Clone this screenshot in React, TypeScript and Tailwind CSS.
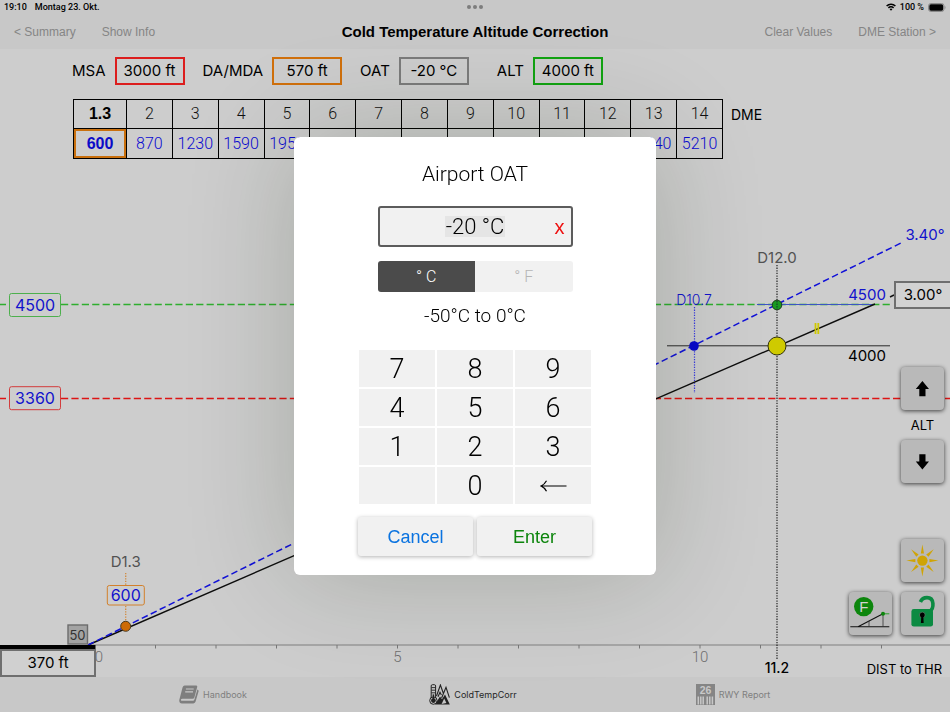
// src/App.tsx
import { useState } from 'react';
import type { ReactNode } from 'react';

type Field = {
  label: string;
  value: string;
  border: string;
  wrap?: string;
};

const FIELDS: Field[] = [
  { label: 'MSA', value: '3000 ft', border: 'border-[#dc1e1e]' },
  { label: 'DA/MDA', value: '570 ft', border: 'border-[#d0700c]' },
  { label: 'OAT', value: '-20 °C', border: 'border-[#7b7b7b]' },
  { label: 'ALT', value: '4000 ft', border: 'border-[#12a312]', wrap: 'ml-2.5' },
];

const DME_ROWS = [
  { dme: '2', alt: 870 },
  { dme: '3', alt: 1230 },
  { dme: '4', alt: 1590 },
  { dme: '5', alt: 1950 },
  { dme: '6', alt: 2310 },
  { dme: '7', alt: 2670 },
  { dme: '8', alt: 3030 },
  { dme: '9', alt: 3400 },
  { dme: '10', alt: 3760 },
  { dme: '11', alt: 4120 },
  { dme: '12', alt: 4480 },
  { dme: '13', alt: 4840 },
  { dme: '14', alt: 5210 },
];

const KEYS = ['7', '8', '9', '4', '5', '6', '1', '2', '3', '', '0', 'back'];

const TICKS = Array.from({ length: 13 }, (_, i) => 95 + (i + 1) * 60.5);

function StatusBar() {
  return (
    <div className="grid h-3.5 grid-cols-3 items-center px-1 font-[Roboto,sans-serif] text-[9px] leading-3 font-medium text-black">
      <div className="flex gap-2">
        <span>19:10</span>
        <span>Montag 23. Okt.</span>
      </div>
      <div className="flex justify-center gap-0.5">
        <span className="size-1 rounded-full bg-[#7d7d7d]" />
        <span className="size-1 rounded-full bg-[#7d7d7d]" />
        <span className="size-1 rounded-full bg-[#7d7d7d]" />
      </div>
      <div className="flex items-center justify-end gap-1">
        <svg width="10" height="8" viewBox="0 0 10 8" fill="none" stroke="#000" strokeWidth="1.5">
          <path d="M0.6 3A6.2 6.2 0 0 1 9.4 3" />
          <path d="M2.4 4.9A3.7 3.7 0 0 1 7.6 4.9" />
          <path d="M5 7.8 3.6 6.3A2 2 0 0 1 6.4 6.3Z" fill="#000" stroke="none" />
        </svg>
        <span>100 %</span>
        <svg width="18" height="9" viewBox="0 0 18 9">
          <rect x="0.5" y="0.5" width="15.5" height="8" rx="2.4" fill="none" stroke="#8a8a8a" />
          <rect x="1.3" y="1.3" width="13.9" height="6.4" rx="1.6" fill="#000" />
          <path d="M16.8 3v3c1-.4 1-2.6 0-3Z" fill="#8a8a8a" />
        </svg>
      </div>
    </div>
  );
}

function NavBar() {
  const link = 'text-[12px] leading-4 text-[#858585]';
  return (
    <nav className="grid h-[35px] grid-cols-[1fr_auto_1fr] items-center px-3.5 font-['Liberation_Sans',sans-serif]">
      <div className="flex gap-[26px]">
        <button className={link}>&lt; Summary</button>
        <button className={link}>Show Info</button>
      </div>
      <h1 className="text-[15px] leading-5 font-bold text-black">Cold Temperature Altitude Correction</h1>
      <div className="flex justify-end gap-[26px]">
        <button className={link}>Clear Values</button>
        <button className={link}>DME Station &gt;</button>
      </div>
    </nav>
  );
}

function FieldRow() {
  return (
    <div className="relative flex items-center gap-[18px] pt-2 pl-[72px] text-[15px] leading-6 text-black">
      {FIELDS.map((f) => (
        <div key={f.label} className={`flex items-center gap-[9px] ${f.wrap ?? ''}`}>
          <span id={`field-${f.label}`}>{f.label}</span>
          <button
            aria-describedby={`field-${f.label}`}
            className={`h-7 w-[70px] border-2 text-center whitespace-nowrap ${f.border}`}
          >
            {f.value}
          </button>
        </div>
      ))}
    </div>
  );
}

function DmeTable() {
  return (
    <div className="relative mt-3.5 flex items-start gap-2 pl-[73px]">
      <table className="w-[650px] table-fixed border-collapse border border-black text-center font-[Roboto,sans-serif] text-[16px] font-light">
        <thead>
          <tr className="h-[29px]">
            <th className="w-[53px] border border-black p-0 font-['Liberation_Sans',sans-serif] text-[16px] font-bold text-black">
              1.3
            </th>
            {DME_ROWS.map((r) => (
              <th key={r.dme} className="border border-black p-0 font-light text-[#111]">
                {r.dme}
              </th>
            ))}
          </tr>
        </thead>
        <tbody>
          <tr className="h-[30px]">
            <td className="border border-black p-0 font-['Liberation_Sans',sans-serif] text-[16px] font-bold text-[#0b0bc8]">
              <div className="flex h-[29px] items-center justify-center border-2 border-[#c9700f]">600</div>
            </td>
            {DME_ROWS.map((r) => (
              <td key={r.dme} className="border border-black p-0 text-[#0a0ad2]">
                {r.alt}
              </td>
            ))}
          </tr>
        </tbody>
      </table>
      <span className="text-[14px] leading-8 text-black">DME</span>
    </div>
  );
}

function ProfileChart() {
  return (
    <svg
      className="absolute inset-0 h-full w-full"
      viewBox="0 49 950 628"
      preserveAspectRatio="xMidYMax meet"
      fontFamily="Inter, sans-serif"
      fontSize="16"
    >
      {/* distance axis */}
      <line x1="88" y1="645" x2="950" y2="645" stroke="#999" strokeWidth="1.6" />
      {TICKS.map((x) => (
        <line key={x} x1={x} y1="645" x2={x} y2="648.5" stroke="#777" />
      ))}
      <g fontFamily="Roboto, sans-serif" fontWeight="300" fontSize="15" fill="#6f6f6f" textAnchor="middle">
        <text x="99" y="662">0</text>
        <text x="397.5" y="662">5</text>
        <text x="700" y="662">10</text>
      </g>
      <text x="777" y="673" fontSize="14" textAnchor="middle" fontWeight="500">11.2</text>
      <text x="942" y="674" fontSize="13" textAnchor="end">DIST to THR</text>

      {/* corrected and minimum altitudes */}
      <path d="M0 304.5H6M61 304.5H892" stroke="#2fae2f" strokeWidth="1.5" strokeDasharray="7.2 3.2" />
      <path d="M0 398.5H6M61 398.5H950" stroke="#dd1414" strokeWidth="1.5" strokeDasharray="7.2 3.2" />
      <path d="M757 304.5H875" stroke="#3d55c4" strokeWidth="1" />
      <path d="M667 345.8H890" stroke="#2a2a2a" strokeWidth="1" />

      {/* reference verticals */}
      <path d="M777 265V660" stroke="#222" strokeWidth="1.2" strokeDasharray="1.3 1.3" />
      <path d="M694.5 307V393" stroke="#3a3ae0" strokeWidth="1.2" strokeDasharray="1.3 1.3" />
      <path d="M125.7 573V586M125.7 606V622" stroke="#d08a40" strokeWidth="1.3" strokeDasharray="1.3 1.3" />

      {/* glide paths */}
      <path d="M88 645 875 304" stroke="#0d0d0d" strokeWidth="1.4" />
      <path d="M88 645 901 243" stroke="#1010d8" strokeWidth="1.5" strokeDasharray="6.6 3.4" />
      <path d="M890 297 894 295" stroke="#111" strokeWidth="1.4" />
      <path d="M815.5 323V334M818.3 323V334" stroke="#cfc800" strokeWidth="1.8" />

      <circle cx="125.7" cy="626.3" r="5" fill="#cc6a06" stroke="#4a3a20" strokeWidth="1" />
      <circle cx="694" cy="346" r="4.8" fill="#0808cc" />
      <circle cx="777" cy="305" r="4.8" fill="#189a20" stroke="#1b3d1b" strokeWidth="1" />
      <path d="M777 301V309" stroke="#123" strokeWidth="1" strokeDasharray="1.3 1.3" />
      <circle cx="777" cy="346" r="9" fill="#cfca00" stroke="#33330a" strokeWidth="1" />

      <g fill="none" strokeWidth="1">
        <rect x="9.5" y="293.5" width="51" height="23" rx="2" stroke="#4db04d" />
        <rect x="9.5" y="386.7" width="51" height="23" rx="2" stroke="#d23c3c" />
        <rect x="107.3" y="585.5" width="37" height="19.5" rx="2" stroke="#d2802a" />
      </g>
      <g fill="#1212cc" textAnchor="middle">
        <text x="35" y="311">4500</text>
        <text x="35" y="404">3360</text>
        <text x="125.7" y="601">600</text>
        <text x="925" y="240" fontSize="15">3.40°</text>
        <text x="867" y="300" fontSize="15">4500</text>
        <text x="694" y="305" fontSize="14" fontWeight="300">D10.7</text>
      </g>
      <text x="867" y="361" fontSize="15" textAnchor="middle">4000</text>
      <g fill="#525252" textAnchor="middle" fontSize="15">
        <text x="777" y="263">D12.0</text>
        <text x="125.7" y="567">D1.3</text>
      </g>

      {/* threshold */}
      <rect x="68" y="625" width="19.5" height="19" fill="#a3a3a3" stroke="#6c6c6c" strokeWidth="1.4" />
      <text x="77.5" y="640" fontSize="13" fill="#333" textAnchor="middle">50</text>
      <rect x="0" y="645" width="95.5" height="4" fill="#000" />
    </svg>
  );
}

function ToolButton({ label, children }: { label: string; children: ReactNode }) {
  return (
    <button
      aria-label={label}
      className="block size-[43px] rounded bg-[#b9b9b9] shadow-[0_1px_4px_rgba(0,0,0,0.7)]"
    >
      <svg className="size-full" viewBox="0 0 43 43">
        {children}
      </svg>
    </button>
  );
}

function Toolbar() {
  return (
    <div className="absolute right-[6px] bottom-[42px] flex flex-col items-end">
      <ToolButton label="Increase altitude">
        <path d="M21.4 14 28 22H24.5V29.3H18.3V22H14.8Z" fill="#000" />
      </ToolButton>
      <div className="w-[43px] text-center text-[13px] leading-[30px] text-black">ALT</div>
      <ToolButton label="Decrease altitude">
        <path d="M21.4 29.5 28 21.5H24.5V14.2H18.3V21.5H14.8Z" fill="#000" />
      </ToolButton>
      <div className="mt-14 mb-2.5">
        <ToolButton label="Brightness">
          <circle cx="21.4" cy="21.6" r="5.2" fill="#cfa405" />
          {[0, 45, 90, 135, 180, 225, 270, 315].map((a) => (
            <path key={a} d="M19.8 14.6 21.4 5.6 23 14.6Z" fill="#cfa405" transform={`rotate(${a} 21.4 21.6)`} />
          ))}
        </ToolButton>
      </div>
      <div className="flex gap-[9px]">
        <ToolButton label="Final approach profile">
          <circle cx="14.7" cy="14.6" r="9.7" fill="#0d860d" />
          <text
            x="14.9"
            y="20"
            fontSize="15"
            fill="#d2d2d2"
            textAnchor="middle"
            fontFamily="Liberation Sans, sans-serif"
          >
            F
          </text>
          <path d="M1.3 34.8H40.3M9 34.8 34 21.7" stroke="#111" strokeWidth="1.1" />
          <path d="M20 29V34.8M34 22V34.8" stroke="#333" strokeWidth="0.8" />
          <path d="M34 21.8H40.3" stroke="#2d9e2d" strokeWidth="1" />
          <circle cx="34" cy="21.8" r="2" fill="#0d860d" />
        </ToolButton>
        <ToolButton label="Unlock">
          <path
            d="M28.8 19.5C33 16.5 33.8 5.6 26 5.6 22.5 5.6 20.6 7.2 19.4 10"
            fill="none"
            stroke="#0b8a42"
            strokeWidth="3.6"
          />
          <rect x="10.4" y="17" width="21.6" height="17.6" rx="2.4" fill="#0b8a42" />
          <circle cx="21.3" cy="23" r="2.9" fill="#000" stroke="#5c8f70" strokeWidth="0.7" />
          <path d="M20.3 24H22.3L22.7 31H19.9Z" fill="#000" />
        </ToolButton>
      </div>
    </div>
  );
}

function BookIcon() {
  return (
    <svg width="20" height="19" viewBox="0 0 20 19">
      <path
        d="M5.6.4H17q1.6 0 1.2 1.6L15.4 12.4q-.4 1.4-1.8 1.4H3.4q-1.6 0-1.5 1.1.1.9 1.3.9H14q1 0 1.4-1.2L18.4 4.6l.9.6q.5.4.2 1.3L16.6 16.6q-.5 1.8-2.2 1.8H3Q-.4 18.2.4 14.4L3.6 2.2Q4.2.4 5.6.4Z"
        fill="#7e7e7e"
      />
      <path d="M6.9 4H14.7M6.2 6.8H14" stroke="#c8c8c8" strokeWidth="1.2" />
    </svg>
  );
}

function ColdIcon() {
  return (
    <svg width="21" height="21" viewBox="0 0 21 21">
      <path d="M6 20.6 11 12.6 13 15.2 16 10.4 20.8 20.6Z" fill="#222" />
      <path d="M7.5 12 11.4 1 14.6 10M12.6 14 17 3.4 20.4 13.6M9 12.8 11 8.2 12.4 11" fill="none" stroke="#222" strokeWidth="1.1" />
      <path d="M12.6 20 15.2 14.4 17.4 19Z" fill="#c8c8c8" />
      <rect x="2.2" y="0.7" width="4.4" height="14" rx="1.2" fill="#c8c8c8" stroke="#222" strokeWidth="1" />
      <path d="M2.4 3.6H6.4M2.4 6.2H6.4M2.4 8.8H6.4" stroke="#222" strokeWidth="0.9" />
      <circle cx="4.4" cy="16.6" r="3.7" fill="#c8c8c8" stroke="#222" strokeWidth="1" />
      <circle cx="4.4" cy="16.6" r="2.4" fill="#222" />
      <path d="M4.4 10.4V16" stroke="#222" strokeWidth="1.6" />
    </svg>
  );
}

function RunwayIcon() {
  return (
    <svg width="19" height="21" viewBox="0 0 19 21">
      <rect width="19" height="21" fill="#858585" />
      <text
        x="9.5"
        y="10"
        fontSize="10.5"
        fontWeight="700"
        textAnchor="middle"
        fill="#c8c8c8"
        fontFamily="Liberation Sans, sans-serif"
      >
        26
      </text>
      <path d="M2.3 12.6V20.4M4.8 12.6V20.4M7.2 12.6V20.4M11.2 12.6V20.4M13.8 12.6V20.4M16.4 12.6V20.4" stroke="#c8c8c8" strokeWidth="1.5" />
    </svg>
  );
}

function TabBar() {
  return (
    <footer className="relative h-[35px] bg-[#c8c8c8] pr-1">
      <div className="mx-auto grid h-full max-w-[780px] grid-cols-3 text-[9px] leading-3 text-[#7f7f7f]">
        <button className="flex items-center justify-center gap-1">
          <BookIcon />
          Handbook
        </button>
        <button className="flex items-center justify-center gap-1 text-[#262626]">
          <ColdIcon />
          ColdTempCorr
        </button>
        <button className="flex items-center justify-center gap-1">
          <RunwayIcon />
          RWY Report
        </button>
      </div>
    </footer>
  );
}

function OatDialog() {
  const [value, setValue] = useState('-20 °C');
  const [unit, setUnit] = useState<'C' | 'F'>('C');

  const press = (key: string) => {
    if (key === 'back') setValue((v) => v.slice(0, -1));
    else setValue((v) => v + key);
  };

  const segment = (u: 'C' | 'F') =>
    unit === u ? 'bg-[#4b4b4b] text-white' : 'bg-[#f1f1f1] text-[#b5b5b5]';

  return (
    <div className="fixed inset-0 grid place-items-center">
      <div
        role="dialog"
        aria-labelledby="oat-title"
        className="flex w-full max-w-[362px] flex-col items-center rounded-md bg-white pt-[23px] pb-[19px] font-[Roboto,sans-serif] font-light text-black shadow-[0_0_110px_rgba(20,36,12,0.2)]"
      >
        <h2 id="oat-title" className="text-[21px] leading-7">
          Airport OAT
        </h2>

        <div className="mt-[18px] grid h-[41px] w-[195px] grid-cols-[1fr_auto_1fr] items-center rounded-[3px] border-2 border-[#5c5c5c] bg-[#f1f1f1]">
          <span />
          <input
            aria-labelledby="oat-title"
            value={value}
            onChange={(e) => setValue(e.target.value)}
            className="h-[21px] w-[60px] bg-[#e5e5e5] text-center text-[22px] leading-5 outline-none"
          />
          <button
            aria-label="Clear"
            onClick={() => setValue('')}
            className="mr-[6px] justify-self-end font-['Liberation_Sans',sans-serif] text-[20px] leading-5 font-normal text-[#ee1111]"
          >
            x
          </button>
        </div>

        <div className="mt-3.5 grid h-[31px] w-[195px] grid-cols-2 overflow-hidden rounded-[3px] text-[16px]">
          <button onClick={() => setUnit('C')} className={segment('C')}>
            ° C
          </button>
          <button onClick={() => setUnit('F')} className={segment('F')}>
            ° F
          </button>
        </div>

        <p className="mt-3 text-[19px] leading-6">-50°C to 0°C</p>

        <div className="mt-[22px] grid w-[232px] grid-cols-3 gap-0.5">
          {KEYS.map((k) => (
            <button
              key={k || 'blank'}
              aria-label={k === 'back' ? 'Delete' : undefined}
              disabled={!k}
              onClick={() => press(k)}
              className="grid h-[37px] place-items-center bg-[#f1f1f1] text-[27px] leading-8"
            >
              {k === 'back' ? (
                <svg width="27" height="12" viewBox="0 0 27 12" fill="none" stroke="#000" strokeWidth="1.2">
                  <path d="M26.5 6H1M6.5.8Q4.5 4.6 1 6 4.5 7.4 6.5 11.2" />
                </svg>
              ) : (
                k
              )}
            </button>
          ))}
        </div>

        <div className="mt-[13px] grid w-[234px] grid-cols-2 gap-1 font-['Liberation_Sans',sans-serif] text-[18px] font-normal">
          <button className="h-[39px] rounded-[3px] bg-[#f1f1f1] pt-0.5 text-[#0a73e0] shadow-[0_1px_4px_rgba(0,0,0,0.3)]">
            Cancel
          </button>
          <button className="h-[39px] rounded-[3px] bg-[#f1f1f1] pt-0.5 text-[#0c850c] shadow-[0_1px_4px_rgba(0,0,0,0.3)]">
            Enter
          </button>
        </div>
      </div>
    </div>
  );
}

export default function App() {
  return (
    <div className="flex min-h-screen flex-col bg-[#cdcdcd] font-[Inter,sans-serif]">
      <header className="bg-[#c8c8c8]">
        <StatusBar />
        <NavBar />
      </header>

      <main className="relative flex-1">
        <ProfileChart />
        <FieldRow />
        <DmeTable />
        <button className="absolute top-[232px] right-0 h-7 w-14 border-2 border-r-0 border-[#6f6f6f] bg-[#d2d2d2] text-[15px] leading-6 text-black">
          3.00°
        </button>
        <button className="absolute bottom-0 left-0 h-7 w-24 border-2 border-[#6f6f6f] bg-[#d0d0d0] text-[15px] leading-6 text-black">
          370 ft
        </button>
        <Toolbar />
      </main>

      <TabBar />
      <OatDialog />
    </div>
  );
}
